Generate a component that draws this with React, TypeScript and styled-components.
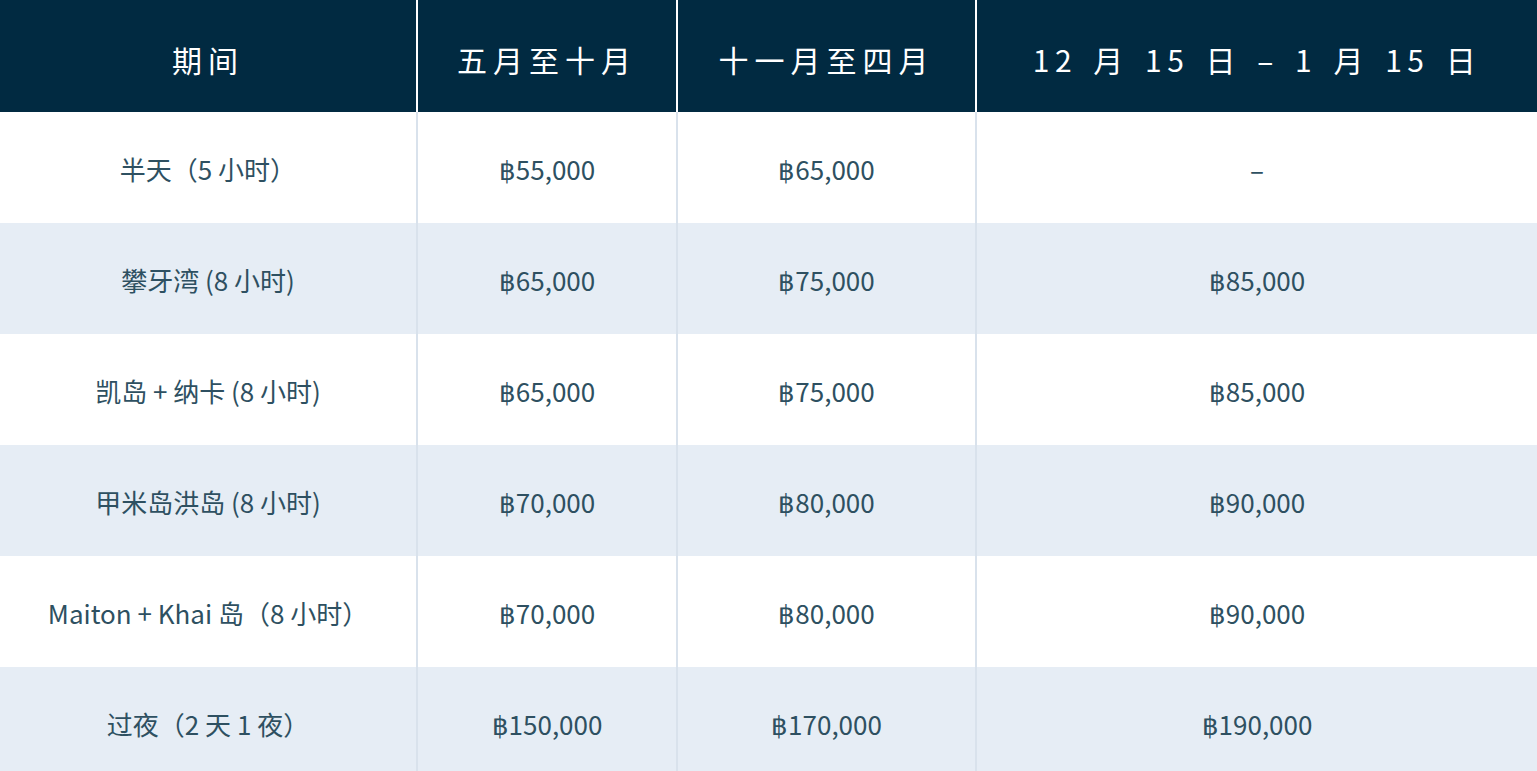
import React from 'react';
import styled, { createGlobalStyle } from 'styled-components';

const GlobalStyle = createGlobalStyle`
  html, body {
    margin: 0;
    padding: 0;
    background: #FFFFFF;
  }
`;

const Table = styled.div`
  display: grid;
  grid-template-columns: 418px 260px 299px 1fr;
  width: 1537px;
  font-family: 'Noto Sans CJK SC', 'Noto Sans', sans-serif;
`;

const HeadCell = styled.div<{ last?: boolean }>`
  height: 112px;
  display: flex;
  align-items: center;
  justify-content: center;
  background-color: #012A41;
  color: #FFFFFF;
  font-size: 30px;
  font-weight: 400;
  letter-spacing: 6px;
  border-right: ${props => (props.last ? 'none' : '2px solid #FFFFFF')};
  padding-top: 6px;
  box-sizing: border-box;
`;

const DateHead = styled.span`
  letter-spacing: 5.5px;
  word-spacing: 4px;
`;

const Cell = styled.div<{ alt: boolean; last?: boolean }>`
  height: 111px;
  display: flex;
  align-items: center;
  justify-content: center;
  background-color: ${props => (props.alt ? '#E6EDF5' : '#FFFFFF')};
  color: #2E5061;
  font-size: 26px;
  border-right: ${props => (props.last ? 'none' : '2px solid #D9E2EC')};
  box-sizing: border-box;
  padding-top: 2px;
`;

const rows = [
  { name: '半天（5 小时）', a: '฿55,000', b: '฿65,000', c: '–' },
  { name: '攀牙湾 (8 小时)', a: '฿65,000', b: '฿75,000', c: '฿85,000' },
  { name: '凯岛 + 纳卡 (8 小时)', a: '฿65,000', b: '฿75,000', c: '฿85,000' },
  { name: '甲米岛洪岛 (8 小时)', a: '฿70,000', b: '฿80,000', c: '฿90,000' },
  { name: 'Maiton + Khai 岛（8 小时）', a: '฿70,000', b: '฿80,000', c: '฿90,000' },
  { name: '过夜（2 天 1 夜）', a: '฿150,000', b: '฿170,000', c: '฿190,000' },
];

const App: React.FC = () => {
  return (
    <>
      <GlobalStyle />
      <Table>
        <HeadCell>期间</HeadCell>
        <HeadCell>五月至十月</HeadCell>
        <HeadCell>十一月至四月</HeadCell>
        <HeadCell last>
          <DateHead>12 月 15 日 – 1 月 15 日</DateHead>
        </HeadCell>
        {rows.map((row, index) => (
          <React.Fragment key={index}>
            <Cell alt={index % 2 === 1}>{row.name}</Cell>
            <Cell alt={index % 2 === 1}>{row.a}</Cell>
            <Cell alt={index % 2 === 1}>{row.b}</Cell>
            <Cell alt={index % 2 === 1} last>{row.c}</Cell>
          </React.Fragment>
        ))}
      </Table>
    </>
  );
};

export default App;
